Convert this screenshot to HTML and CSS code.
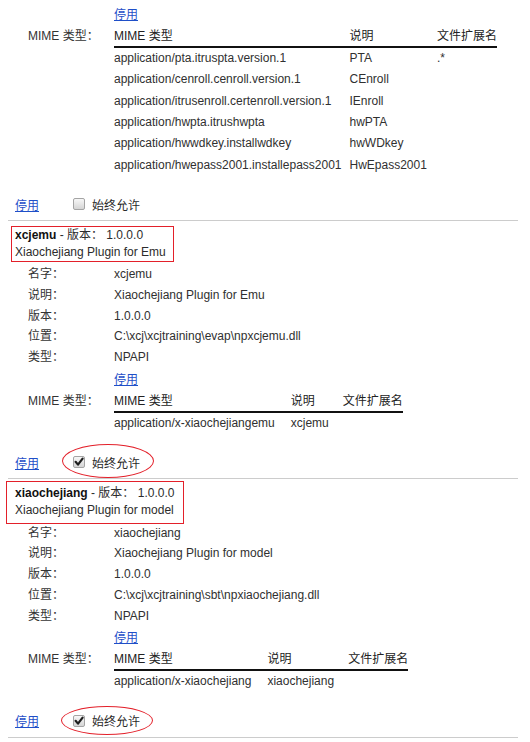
FILE: index.html
```html
<!DOCTYPE html>
<html lang="zh-CN">
<head>
<meta charset="utf-8">
<title>插件</title>
<link rel="stylesheet" href="styles.css">
</head>
<body>
<div class="page">

  <section class="plugin first">
    <div class="details">
      <span class="label"></span>
      <span class="link-row"><a href="#">停用</a></span>
      <span class="label mime-label">MIME 类型：</span>
      <table class="mime compact">
        <thead>
          <tr><th>MIME 类型</th><th>说明</th><th>文件扩展名</th></tr>
        </thead>
        <tbody>
          <tr><td>application/pta.itruspta.version.1</td><td>PTA</td><td>.*</td></tr>
          <tr><td>application/cenroll.cenroll.version.1</td><td>CEnroll</td><td></td></tr>
          <tr><td>application/itrusenroll.certenroll.version.1</td><td>IEnroll</td><td></td></tr>
          <tr><td>application/hwpta.itrushwpta</td><td>hwPTA</td><td></td></tr>
          <tr><td>application/hwwdkey.installwdkey</td><td>hwWDkey</td><td></td></tr>
          <tr><td>application/hwepass2001.installepass2001</td><td>HwEpass2001</td><td></td></tr>
        </tbody>
      </table>
    </div>
    <div class="actions">
      <a href="#">停用</a>
      <span class="allow"><span class="box"></span>始终允许</span>
    </div>
  </section>

  <section class="plugin">
    <div class="mark">
      <div><b>xcjemu</b> - 版本： 1.0.0.0</div>
      <div class="desc">Xiaochejiang Plugin for Emu</div>
    </div>
    <div class="details">
      <span class="label">名字：</span><span>xcjemu</span>
      <span class="label">说明：</span><span>Xiaochejiang Plugin for Emu</span>
      <span class="label">版本：</span><span>1.0.0.0</span>
      <span class="label">位置：</span><span>C:\xcj\xcjtraining\evap\npxcjemu.dll</span>
      <span class="label">类型：</span><span>NPAPI</span>
      <span class="label"></span>
      <span class="link-row"><a href="#">停用</a></span>
      <span class="label mime-label">MIME 类型：</span>
      <table class="mime">
        <thead>
          <tr><th>MIME 类型</th><th>说明</th><th>文件扩展名</th></tr>
        </thead>
        <tbody>
          <tr><td>application/x-xiaochejiangemu</td><td>xcjemu</td><td></td></tr>
        </tbody>
      </table>
    </div>
    <div class="actions">
      <a href="#">停用</a>
      <span class="allow ring-1"><span class="box"><svg class="tick" viewBox="0 0 12 12" width="12" height="12"><path d="M2.6 5.8 L5 8.6 L9.6 2.6" fill="none" stroke="#1e1e1e" stroke-width="2.2" stroke-linecap="round" stroke-linejoin="round"/></svg></span>始终允许<span class="ring"></span></span>
    </div>
  </section>

  <section class="plugin">
    <div class="mark wide">
      <div><b>xiaochejiang</b> - 版本： 1.0.0.0</div>
      <div class="desc">Xiaochejiang Plugin for model</div>
    </div>
    <div class="details">
      <span class="label">名字：</span><span>xiaochejiang</span>
      <span class="label">说明：</span><span>Xiaochejiang Plugin for model</span>
      <span class="label">版本：</span><span>1.0.0.0</span>
      <span class="label">位置：</span><span>C:\xcj\xcjtraining\sbt\npxiaochejiang.dll</span>
      <span class="label">类型：</span><span>NPAPI</span>
      <span class="label"></span>
      <span class="link-row"><a href="#">停用</a></span>
      <span class="label mime-label">MIME 类型：</span>
      <table class="mime">
        <thead>
          <tr><th>MIME 类型</th><th>说明</th><th>文件扩展名</th></tr>
        </thead>
        <tbody>
          <tr><td>application/x-xiaochejiang</td><td>xiaochejiang</td><td></td></tr>
        </tbody>
      </table>
    </div>
    <div class="actions">
      <a href="#">停用</a>
      <span class="allow ring-2"><span class="box"><svg class="tick" viewBox="0 0 12 12" width="12" height="12"><path d="M2.6 5.8 L5 8.6 L9.6 2.6" fill="none" stroke="#1e1e1e" stroke-width="2.2" stroke-linecap="round" stroke-linejoin="round"/></svg></span>始终允许<span class="ring"></span></span>
    </div>
  </section>

</div>
</body>
</html>
```

FILE: styles.css
```css
html, body {
  margin: 0;
  padding: 0;
  background: #ffffff;
}

body {
  font-family: "Liberation Sans", "Noto Sans CJK SC", sans-serif;
  font-size: 12px;
  color: #303030;
}

a {
  color: #1f4fc8;
  text-decoration: underline;
}

.page {
  margin: 0 12px 0 8px;
  padding-top: 3px;
}

.plugin {
  border-bottom: 1px solid #cccccc;
}

/* title block with red annotation box */
.mark {
  display: block;
  box-sizing: border-box;
  width: 163px;
  margin: 5px 0 0 3px;
  padding: 0 3px 1px 3px;
  border: 1px solid #e3202a;
  line-height: 16px;
  color: #2c2c2c;
  white-space: nowrap;
}

.mark .desc {
  padding-top: 1px;
}

.mark b {
  color: #111;
}

.mark.wide {
  width: 178px;
  margin: 1.5px 0 -3.5px -2px;
  padding: 3px 3px 5.5px 8px;
}

/* details grid */
.details {
  display: grid;
  grid-template-columns: 86px auto;
  justify-content: start;
  padding-left: 20px;
  margin-top: 2px;
  line-height: 20.75px;
}

.plugin.first .details {
  margin-top: 0;
}

.label {
  color: #333;
}

.link-row {
  padding-top: 2px;
}

/* MIME table */
.mime {
  border-collapse: separate;
  border-spacing: 0;
  font-size: 12px;
  color: #303030;
}

.mime th {
  font-weight: normal;
  text-align: left;
  line-height: 20px;
  padding: 0 14px 0 0;
  border-bottom: 2px solid #111;
  white-space: nowrap;
  color: #222;
}

.mime td {
  line-height: 21.4px;
  padding: 0 14px 0 0;
  white-space: nowrap;
}

.mime th:first-child,
.mime td:first-child {
  padding-right: 16px;
}

.mime.compact th:first-child,
.mime.compact td:first-child {
  padding-right: 8px;
}

.mime.compact th:nth-child(2),
.mime.compact td:nth-child(2) {
  padding-right: 10px;
}

.mime th:last-child,
.mime td:last-child {
  padding-right: 0;
}

/* actions row */
.actions {
  display: flex;
  align-items: center;
  height: 20px;
  line-height: 20px;
  margin: 19.5px 0 4.5px 0;
  padding-left: 7px;
}

.allow {
  position: relative;
  display: inline-flex;
  align-items: center;
  gap: 7px;
  margin-left: 34px;
  height: 20px;
  color: #2a2a2a;
}

.box {
  display: block;
  box-sizing: border-box;
  width: 12px;
  height: 12px;
  margin-bottom: 3px;
  border: 1px solid #a4a4a4;
  border-radius: 2px;
  background: linear-gradient(#f7f7f7, #d5d5d5);
  position: relative;
}

.tick {
  position: absolute;
  left: -1px;
  top: -1px;
  display: block;
}

/* red hand-drawn ellipse annotation */
.ring {
  position: absolute;
  border: 1px solid #e3202a;
  border-radius: 50%;
  pointer-events: none;
}

.ring-1 .ring {
  left: -11px;
  right: -14px;
  top: -9.5px;
  bottom: -4.5px;
}

.ring-2 .ring {
  left: -12px;
  right: -13px;
  top: -6px;
  bottom: -3px;
}
```
